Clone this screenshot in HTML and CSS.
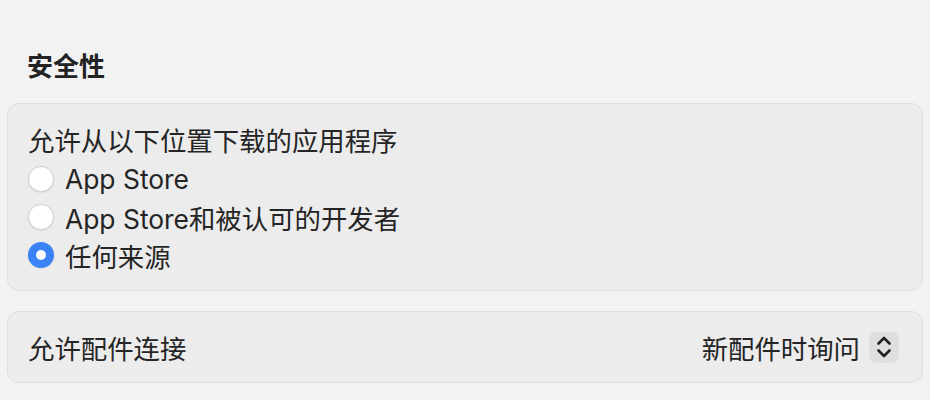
FILE: index.html
```html
<!DOCTYPE html>
<html lang="zh-CN">
<head>
<meta charset="utf-8">
<link rel="stylesheet" href="styles.css">
</head>
<body>
<div class="page">
  <h2 class="section-title">安全性</h2>
  <div class="card card-sources">
    <div class="card-label">允许从以下位置下载的应用程序</div>
    <div class="radio-row"><span class="radio"></span><span>App Store</span></div>
    <div class="radio-row"><span class="radio"></span><span>App Store和被认可的开发者</span></div>
    <div class="radio-row"><span class="radio radio-on"></span><span>任何来源</span></div>
  </div>
  <div class="card card-row">
    <div class="row-label">允许配件连接</div>
    <div class="popup">
      <span>新配件时询问</span>
      <span class="stepper">
        <svg width="16" height="26" viewBox="0 0 16 26"><path d="M2.5 9.5 L8 4 L13.5 9.5 M2.5 16.5 L8 22 L13.5 16.5" fill="none" stroke="#222" stroke-width="2.6" stroke-linecap="round" stroke-linejoin="round"/></svg>
      </span>
    </div>
  </div>
</div>
</body>
</html>
```

FILE: styles.css
```css
html, body {
  margin: 0;
  padding: 0;
  background: #f2f2f2;
}
body {
  font-family: Inter, "Noto Sans CJK SC", sans-serif;
  font-size: 26.4px;
  color: #252525;
}
.page {
  padding: 48px 7px 0 7px;
}
.section-title {
  margin: 0 0 17px 0;
  padding-left: 20px;
  font-size: 26px;
  font-weight: 700;
  line-height: 38px;
  color: #222;
}
.card {
  background: #ececec;
  border: 1px solid #dedede;
  border-radius: 12px;
}
.card-sources {
  padding: 18px 20px 16px 20px;
}
.card-label {
  line-height: 38px;
}
.radio-row {
  display: flex;
  align-items: center;
  gap: 11px;
  height: 38px;
}
.radio {
  box-sizing: border-box;
  width: 26px;
  height: 26px;
  border-radius: 50%;
  background: #fff;
  border: 1px solid #d2d2d2;
  box-shadow: 0 0.5px 1.5px rgba(0,0,0,0.12);
  flex: none;
}
.radio-on {
  border: none;
  background: #3a82f6;
  position: relative;
}
.radio-on::after {
  content: "";
  position: absolute;
  left: 8px;
  top: 8px;
  width: 10px;
  height: 10px;
  border-radius: 50%;
  background: #fff;
}
.card-row {
  margin-top: 20px;
  height: 70px;
  display: flex;
  align-items: center;
  justify-content: space-between;
  padding: 0 23px 0 20px;
}
.popup {
  display: flex;
  align-items: center;
  gap: 9px;
}
.stepper {
  width: 30px;
  height: 31px;
  border-radius: 7px;
  background: #dfdfdf;
  display: flex;
  align-items: center;
  justify-content: center;
}
```
